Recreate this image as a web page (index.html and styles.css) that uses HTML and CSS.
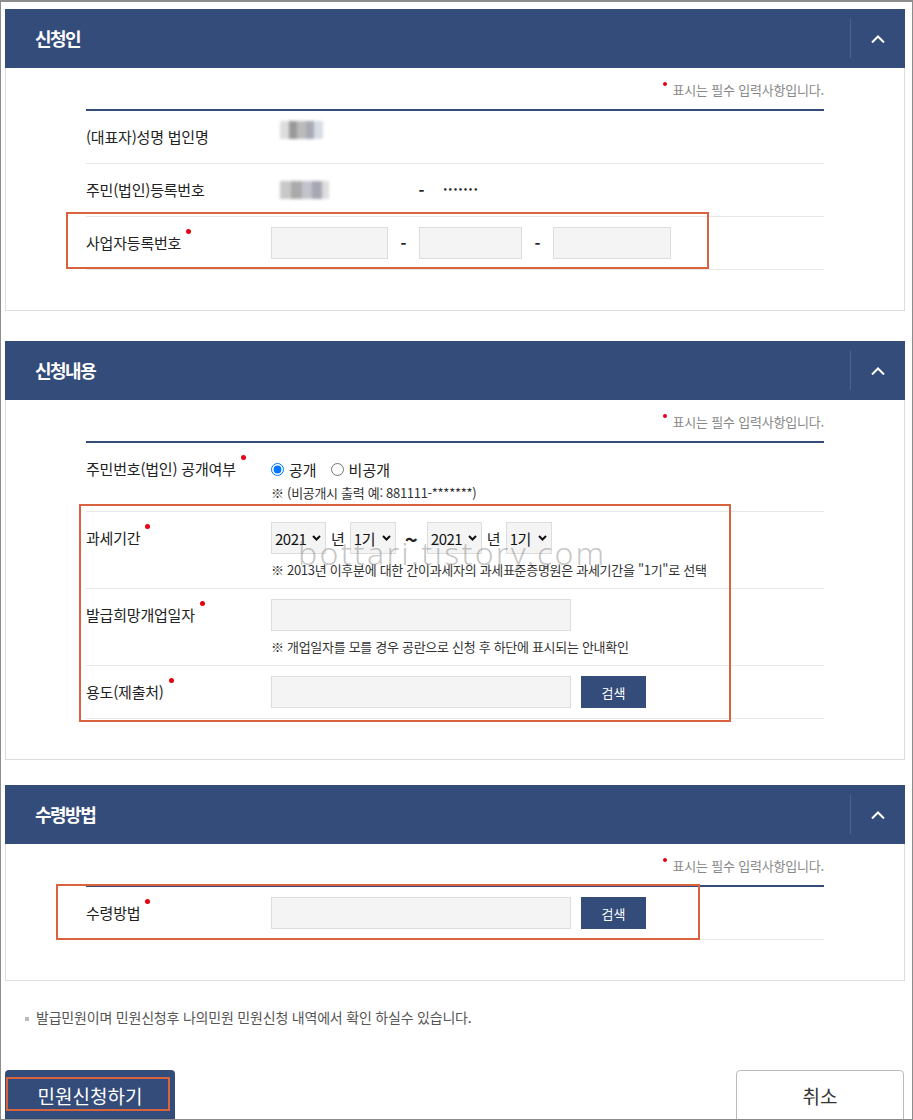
FILE: index.html
```html
<!DOCTYPE html>
<html lang="ko">

<head>
  <meta charset="UTF-8" />
  <title>민원신청</title>
  <link rel="stylesheet" href="styles.css">
</head>

<body>
  <div class="frame">

    <!-- 신청인 -->
    <section class="sec">
      <div class="sec-head">
        <h2>신청인</h2>
        <span class="toggle">
          <svg width="14" height="8" viewBox="0 0 14 8"><path d="M1 7.5 L7 1.5 L13 7.5" fill="none" stroke="#fff" stroke-width="2"/></svg>
        </span>
      </div>
      <div class="sec-body">
        <p class="req-note"><i class="dot"></i>표시는 필수 입력사항입니다.</p>
        <div class="tbl">
          <div class="row">
            <div class="th">(대표자)성명 법인명</div>
            <div class="td"><span class="blur blur-name"></span></div>
          </div>
          <div class="row">
            <div class="th">주민(법인)등록번호</div>
            <div class="td line">
              <span class="blur blur-num"></span>
              <span class="hyph hyph-wide">-</span>
              <span class="secret">•••••••</span>
            </div>
          </div>
          <div class="row">
            <div class="th">사업자등록번호<i class="dot"></i></div>
            <div class="td line">
              <input class="ipt w117" type="text">
              <span class="hyph">-</span>
              <input class="ipt w103" type="text">
              <span class="hyph">-</span>
              <input class="ipt w118" type="text">
            </div>
          </div>
        </div>
        <span class="mark mark1"></span>
      </div>
    </section>

    <!-- 신청내용 -->
    <section class="sec">
      <div class="sec-head">
        <h2>신청내용</h2>
        <span class="toggle">
          <svg width="14" height="8" viewBox="0 0 14 8"><path d="M1 7.5 L7 1.5 L13 7.5" fill="none" stroke="#fff" stroke-width="2"/></svg>
        </span>
      </div>
      <div class="sec-body">
        <p class="req-note"><i class="dot"></i>표시는 필수 입력사항입니다.</p>
        <div class="tbl">
          <div class="row">
            <div class="th">주민번호(법인) 공개여부<i class="dot"></i></div>
            <div class="td">
              <div class="line radios">
                <label><input type="radio" name="open" checked>공개</label>
                <label><input type="radio" name="open">비공개</label>
              </div>
              <p class="hint hint-top">※ (비공개시 출력 예: 881111-*******)</p>
            </div>
          </div>
          <div class="row">
            <div class="th">과세기간<i class="dot"></i></div>
            <div class="td">
              <div class="line period">
                <span class="sel w55"><select><option>2021</option></select><svg width="9" height="6" viewBox="0 0 9 6"><path d="M1 1 L4.5 4.5 L8 1" fill="none" stroke="#111" stroke-width="2"/></svg></span>
                <span class="unit">년</span>
                <span class="sel w46"><select><option>1기</option></select><svg width="9" height="6" viewBox="0 0 9 6"><path d="M1 1 L4.5 4.5 L8 1" fill="none" stroke="#111" stroke-width="2"/></svg></span>
                <span class="tilde">~</span>
                <span class="sel w55"><select><option>2021</option></select><svg width="9" height="6" viewBox="0 0 9 6"><path d="M1 1 L4.5 4.5 L8 1" fill="none" stroke="#111" stroke-width="2"/></svg></span>
                <span class="unit">년</span>
                <span class="sel w46"><select><option>1기</option></select><svg width="9" height="6" viewBox="0 0 9 6"><path d="M1 1 L4.5 4.5 L8 1" fill="none" stroke="#111" stroke-width="2"/></svg></span>
              </div>
              <p class="hint">※ 2013년 이후분에 대한 간이과세자의 과세표준증명원은 과세기간을 "1기"로 선택</p>
            </div>
          </div>
          <div class="row">
            <div class="th">발급희망개업일자<i class="dot"></i></div>
            <div class="td">
              <input class="ipt w300" type="text">
              <p class="hint">※ 개업일자를 모를 경우 공란으로 신청 후 하단에 표시되는 안내확인</p>
            </div>
          </div>
          <div class="row">
            <div class="th">용도(제출처)<i class="dot"></i></div>
            <div class="td line">
              <input class="ipt w300" type="text">
              <button class="btn-search" type="button">검색</button>
            </div>
          </div>
        </div>
        <span class="mark mark2"></span>
        <span class="wm">bottari.tistory.com</span>
      </div>
    </section>

    <!-- 수령방법 -->
    <section class="sec sec-last">
      <div class="sec-head">
        <h2>수령방법</h2>
        <span class="toggle">
          <svg width="14" height="8" viewBox="0 0 14 8"><path d="M1 7.5 L7 1.5 L13 7.5" fill="none" stroke="#fff" stroke-width="2"/></svg>
        </span>
      </div>
      <div class="sec-body">
        <p class="req-note"><i class="dot"></i>표시는 필수 입력사항입니다.</p>
        <div class="tbl">
          <div class="row">
            <div class="th">수령방법<i class="dot"></i></div>
            <div class="td line">
              <input class="ipt w300" type="text">
              <button class="btn-search" type="button">검색</button>
            </div>
          </div>
        </div>
        <span class="mark mark3"></span>
      </div>
    </section>

    <p class="info"><i class="bul"></i>발급민원이며 민원신청후 나의민원 민원신청 내역에서 확인 하실수 있습니다.</p>

    <div class="btns">
      <button class="btn btn-submit" type="button">민원신청하기<span class="mark mark4"></span></button>
      <button class="btn btn-cancel" type="button">취소</button>
    </div>

  </div>
</body>

</html>
```

FILE: styles.css
```css
/* 초기화 */
html,
body,
h2,
p {
  margin: 0;
  padding: 0;
}

body {
  font-family: "Noto Sans CJK KR", "Noto Sans", sans-serif;
  color: #222;
  background: #fff;
}

/* 캡쳐 테두리 */
.frame {
  position: relative;
  box-sizing: border-box;
  width: 913px;
  height: 1120px;
  overflow: hidden;
  border: 1px solid #8c8c8c;
  border-top-width: 2px;
  padding: 7px 7px 0 4px;
}

/* 섹션 */
.sec + .sec {
  margin-top: 30px;
}

.sec + .sec-last {
  margin-top: 25px;
}

/* 섹션 제목바 */
.sec-head {
  display: flex;
  height: 59px;
  background-color: #344c79;
}

.sec-head h2 {
  flex: 1;
  padding-left: 30px;
  font-size: 18px;
  font-weight: 700;
  line-height: 59px;
  letter-spacing: -1.5px;
  color: #fff;
}

.toggle {
  display: flex;
  align-items: center;
  justify-content: center;
  width: 54px;
  margin: 10px 0;
  border-left: 1px solid #4c6290;
}

/* 섹션 내용 */
.sec-body {
  position: relative;
  padding: 13px 80px 40px;
  border: 1px solid #ddd;
  border-top: 0;
}

.req-note {
  margin-bottom: 10px;
  font-size: 13px;
  line-height: 18px;
  color: #888;
  text-align: right;
  letter-spacing: -0.2px;
}

.req-note .dot {
  width: 4px;
  height: 4px;
  margin: 0 6px 0 0;
  vertical-align: 9px;
}

/* 필수 표시 점 */
.dot {
  display: inline-block;
  width: 5px;
  height: 5px;
  margin-left: 5px;
  border-radius: 50%;
  background-color: #e60012;
  vertical-align: 15px;
}

/* 표 */
.tbl {
  border-top: 2px solid #344c79;
}

.row {
  display: grid;
  grid-template-columns: 185px 1fr;
  padding: 10px 0;
  border-bottom: 1px solid #e8e8e8;
}

.th {
  font-size: 15px;
  line-height: 32px;
  color: #222;
  letter-spacing: -0.2px;
}

.td {
  display: flex;
  flex-direction: column;
  align-items: flex-start;
  min-height: 32px;
}

.td.line,
.line {
  flex-direction: row;
  display: flex;
  align-items: center;
  height: 32px;
}

/* 모자이크 처리 */
.blur {
  display: inline-block;
  height: 18px;
  filter: blur(1.5px);
  background:
    linear-gradient(90deg, #ddd 0 20%, #999 20% 40%, #bbb 40% 60%, #a8aab4 60% 80%, #d8dce4 80%);
}

.blur-name {
  width: 43px;
  margin-left: 9px;
}

.blur-num {
  width: 49px;
  margin-left: 9px;
  background:
    linear-gradient(90deg, #c8c8c8 0 22%, #aaa 22% 44%, #c3c3cc 44% 66%, #a7a7b3 66% 85%, #ddd 85%);
}

.hyph {
  width: 7px;
  margin: 0 12px;
  font-size: 16px;
  font-weight: 700;
  text-align: center;
}

.hyph-wide {
  margin: 0 0 0 89px;
}

/* 가린 번호 */
.secret {
  margin-left: 18px;
  font-family: "DejaVu Sans", sans-serif;
  font-size: 7px;
  font-weight: 700;
  letter-spacing: 0.6px;
}

/* 입력칸 */
.ipt {
  box-sizing: border-box;
  height: 32px;
  margin: 0;
  padding: 0 8px;
  border: 1px solid #ddd;
  background-color: #f4f4f4;
  font-family: inherit;
}

.w117 { width: 117px; }
.w103 { width: 103px; }
.w118 { width: 118px; }
.w300 { width: 300px; }

.btn-search {
  width: 65px;
  height: 32px;
  margin-left: 10px;
  border: 0;
  background-color: #344c79;
  color: #fff;
  font-family: inherit;
  font-size: 13px;
}

/* 라디오 */
.radios label {
  display: flex;
  align-items: center;
  margin-right: 14px;
  font-size: 15px;
  color: #222;
}

.radios input {
  width: 13px;
  height: 13px;
  margin: 0 5px 0 0;
}

.hint {
  margin-top: 8px;
  font-size: 13px;
  line-height: 16px;
  color: #333;
  letter-spacing: -0.3px;
}

.hint-top {
  margin-top: 0;
}

/* 셀렉트 */
.period {
  gap: 4px;
}

.sel {
  position: relative;
  display: inline-block;
  height: 32px;
}

.sel select {
  box-sizing: border-box;
  width: 100%;
  height: 32px;
  padding: 0 12px 0 3px;
  border: 1px solid #ddd;
  background-color: #f4f4f4;
  font-family: inherit;
  font-size: 15px;
  letter-spacing: -0.5px;
  color: #111;
  appearance: none;
  -webkit-appearance: none;
}

.sel svg {
  position: absolute;
  top: 13px;
  right: 5px;
}

.w55 { width: 55px; }
.w46 { width: 46px; }

.unit {
  font-size: 15px;
  margin: 0 1px;
}

.tilde {
  margin: 0 5px;
  font-size: 22px;
  line-height: 1;
  font-weight: 700;
}

/* 캡쳐 표시 박스 */
.mark {
  position: absolute;
  box-sizing: border-box;
  border: 2px solid #d9623f;
  pointer-events: none;
}

.mark1 { left: 60px; top: 144px; width: 643px; height: 57px; }
.mark2 { left: 73px; top: 104px; width: 652px; height: 218px; }
.mark3 { left: 50px; top: 40px; width: 644px; height: 56px; }
.mark4 { left: 1px; top: 7px; width: 164px; height: 34px; }

/* 워터마크 */
.wm {
  position: absolute;
  left: 292px;
  top: 135px;
  font-family: "Noto Sans", sans-serif;
  font-size: 32px;
  font-weight: 300;
  line-height: 36px;
  letter-spacing: 2.3px;
  color: rgba(110, 110, 110, 0.4);
  pointer-events: none;
}

/* 안내 */
.info {
  margin-top: 27px;
  padding-left: 20px;
  font-size: 14px;
  line-height: 18px;
  color: #555;
  letter-spacing: -0.2px;
}

.bul {
  display: inline-block;
  width: 4px;
  height: 4px;
  margin-right: 7px;
  background-color: #bbb;
  vertical-align: middle;
}

/* 하단 버튼 */
.btns {
  display: flex;
  justify-content: space-between;
  margin-top: 44px;
  padding-right: 1px;
}

.btn {
  position: relative;
  box-sizing: border-box;
  height: 54px;
  border-radius: 4px;
  font-family: inherit;
  font-size: 19px;
  padding: 0 0 4px;
}

.btn-submit {
  width: 170px;
  border: 0;
  background-color: #344c79;
  color: #fff;
}

.btn-cancel {
  width: 168px;
  border: 1px solid #bbb;
  background-color: #fff;
  color: #333;
}
```
